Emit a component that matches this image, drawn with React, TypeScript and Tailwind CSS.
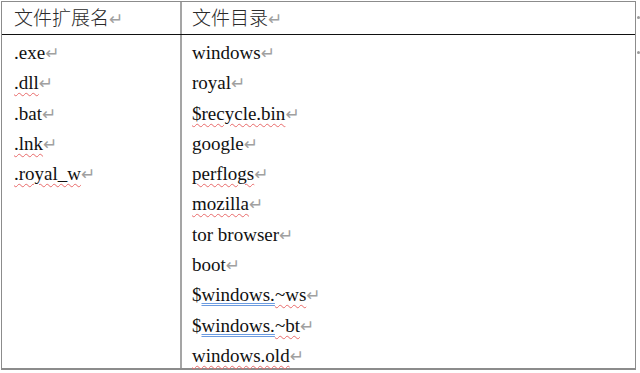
const serif = "font-['Liberation_Serif','Noto_Sans_CJK_SC',serif]"

type Part = { t: string; mark?: 'red' | 'blue' }

const leftRows: Part[][] = [
  [{ t: '.exe' }],
  [{ t: '.dll', mark: 'red' }],
  [{ t: '.bat' }],
  [{ t: '.lnk', mark: 'red' }],
  [{ t: '.royal_w', mark: 'red' }],
]

const rightRows: Part[][] = [
  [{ t: 'windows' }],
  [{ t: 'royal' }],
  [{ t: '$recycle.bin', mark: 'red' }],
  [{ t: 'google' }],
  [{ t: 'perflogs', mark: 'red' }],
  [{ t: 'mozilla', mark: 'red' }],
  [{ t: 'tor browser' }],
  [{ t: 'boot' }],
  [{ t: '$' }, { t: 'windows.', mark: 'blue' }, { t: '~ws', mark: 'red' }],
  [{ t: '$' }, { t: 'windows.', mark: 'blue' }, { t: '~bt', mark: 'red' }],
  [{ t: 'windows.old', mark: 'red' }],
]

// paragraph mark, as Word shows it
function Ret() {
  return <span className="text-[17px] font-normal text-[#a0a0a0] font-['DejaVu_Sans',sans-serif]">↵</span>
}

function Line({ parts }: { parts: Part[] }) {
  return (
    <div className="h-[30.3px] leading-[30.3px] whitespace-nowrap">
      {parts.map((p, i) => (
        <span
          key={i}
          className={
            p.mark === 'red'
              ? 'underline decoration-wavy decoration-[#e86a6a] decoration-1 underline-offset-[3px]'
              : p.mark === 'blue'
                ? 'underline decoration-double decoration-[#6b9be0] decoration-1 underline-offset-[2px]'
                : ''
          }
        >
          {p.t}
        </span>
      ))}
      <Ret />
    </div>
  )
}

export default function App() {
  return (
    <div className={`w-[640px] h-[373px] bg-white text-[#111] ${serif} text-[19px] flex pt-[1px] pl-[1px]`}>
      <div className="w-[636px] h-[369px] border border-b-2 border-[#8c8c8c] flex flex-col">
        <div className="flex h-[33px] shrink-0 border-b-[1.5px] border-[#111] text-[#2a2a2a] font-light">
          <div className="w-[180px] border-r-2 border-[#a5a5a5] pl-[12px] pt-[3px] flex items-center">
            文件扩展名<Ret />
          </div>
          <div className="flex-1 pl-[10px] pt-[3px] flex items-center">
            文件目录<Ret />
          </div>
        </div>
        <div className="flex flex-1 min-h-0">
          <div className="w-[180px] border-r-2 border-[#a5a5a5] pl-[12px] pt-[3px]">
            {leftRows.map((r, i) => (
              <Line key={i} parts={r} />
            ))}
          </div>
          <div className="flex-1 pl-[10px] pt-[3px]">
            {rightRows.map((r, i) => (
              <Line key={i} parts={r} />
            ))}
          </div>
        </div>
      </div>
      <div className="flex flex-col pl-[1px] pt-[15px] gap-[32px]">
        <div className="w-[3px] h-[3px] rounded-full bg-[#9a9a9a]" />
        <div className="w-[3px] h-[3px] rounded-full bg-[#9a9a9a]" />
      </div>
    </div>
  )
}
